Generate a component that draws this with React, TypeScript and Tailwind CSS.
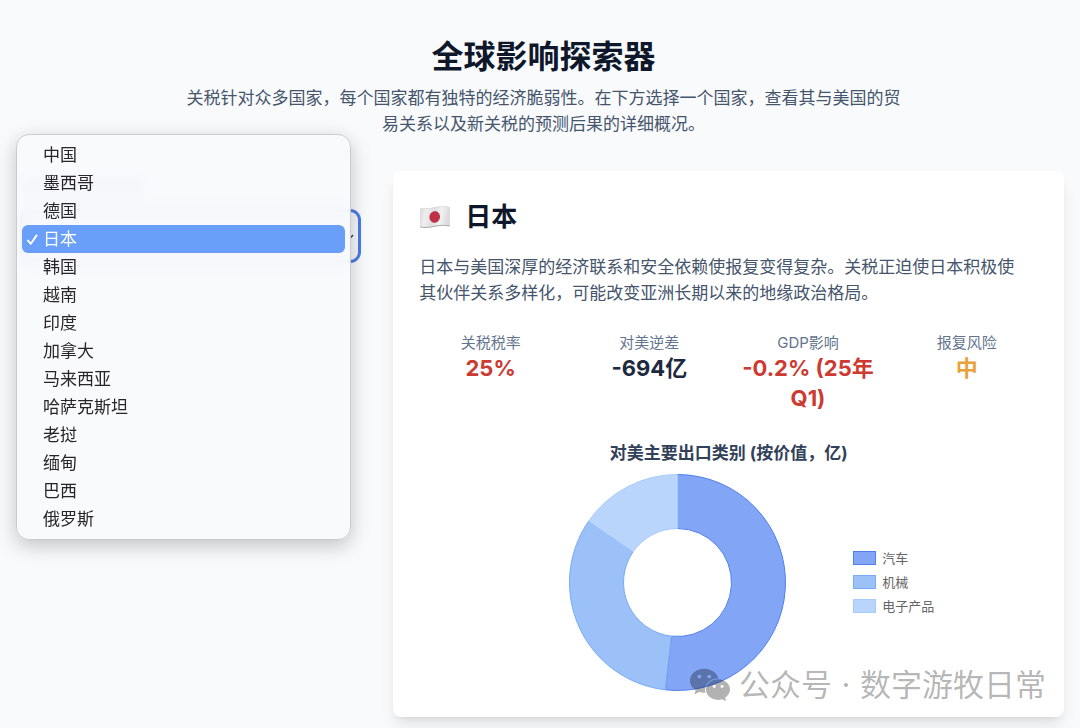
import { useState } from "react";
import { FaWeixin } from "react-icons/fa";

const countries = [
  "中国",
  "墨西哥",
  "德国",
  "日本",
  "韩国",
  "越南",
  "印度",
  "加拿大",
  "马来西亚",
  "哈萨克斯坦",
  "老挝",
  "缅甸",
  "巴西",
  "俄罗斯",
];

const stats = [
  { label: "关税税率", value: "25%", tone: "text-[#cd3a32]" },
  { label: "对美逆差", value: "-694亿", tone: "text-slate-800" },
  { label: "GDP影响", value: "-0.2% (25年 Q1)", tone: "text-[#cd3a32]" },
  { label: "报复风险", value: "中", tone: "text-[#e9a23b]" },
];

const exportsData = [
  {
    label: "汽车",
    share: 51.8,
    shape: "fill-[#82a5f5] stroke-[#4f80ee]",
    swatch: "border-[#4f80ee] bg-[#82a5f5]",
  },
  {
    label: "机械",
    share: 32.8,
    shape: "fill-[#9cc0f8] stroke-[#78aaf7]",
    swatch: "border-[#78aaf7] bg-[#9cc0f8]",
  },
  {
    label: "电子产品",
    share: 15.4,
    shape: "fill-[#b9d5fc] stroke-[#a6cbfb]",
    swatch: "border-[#a6cbfb] bg-[#b9d5fc]",
  },
];

function point(radius: number, share: number) {
  const angle = (share / 100) * Math.PI * 2;
  return `${108.5 + radius * Math.sin(angle)} ${108.5 - radius * Math.cos(angle)}`;
}

function ringSlice(start: number, end: number) {
  const large = end - start > 50 ? 1 : 0;
  return [
    `M ${point(108, start)}`,
    `A 108 108 0 ${large} 1 ${point(108, end)}`,
    `L ${point(54, end)}`,
    `A 54 54 0 ${large} 0 ${point(54, start)}`,
    "Z",
  ].join(" ");
}

function Donut() {
  let start = 0;
  return (
    <svg viewBox="0 0 217 217" className="h-[217px] w-[217px]" role="img" aria-label="对美主要出口类别">
      {exportsData.map((item) => {
        const from = start;
        start += item.share;
        return <path key={item.label} d={ringSlice(from, start)} className={item.shape} strokeWidth="1" />;
      })}
    </svg>
  );
}

function JapanFlag() {
  return (
    <svg viewBox="0 0 30 22" className="h-[22px] w-[30px]" aria-hidden="true">
      <defs>
        <linearGradient id="cloth" x1="0" x2="1" y1="0" y2="0.15">
          <stop offset="0" stopColor="#d9d9d9" />
          <stop offset="0.22" stopColor="#efefef" />
          <stop offset="0.5" stopColor="#dedede" />
          <stop offset="0.75" stopColor="#f3f3f3" />
          <stop offset="1" stopColor="#dcdcdc" />
        </linearGradient>
      </defs>
      <path
        d="M0.5 2.2C5 3 9 2.8 14 1.6C19 0.4 24 0.2 29.5 1.2V20C24 19 19 19.3 14 20.4C9 21.6 5 21.8 0.5 21Z"
        fill="url(#cloth)"
        stroke="#cfcfcf"
        strokeWidth="0.6"
      />
      <path d="M0.5 21C5 21.8 9 21.6 14 20.4C19 19.3 24 19 29.5 20" fill="none" stroke="#a9a9a9" strokeWidth="0.9" />
      <ellipse cx="14.7" cy="11" rx="5.3" ry="5.8" fill="#bd3048" transform="rotate(12 14.7 11)" />
    </svg>
  );
}

function CountryPicker() {
  const [selected, setSelected] = useState("日本");
  return (
    <div className="relative pt-[7px]">
      <div className="h-4 w-[120px] rounded bg-slate-400/50" aria-hidden="true" />
      <div className="relative mt-[18px]">
        <select
          aria-label="国家"
          value={selected}
          onChange={(e) => setSelected(e.target.value)}
          className="block h-12 w-full appearance-none rounded-lg bg-[#f6f7f9] px-3 text-[17px] text-transparent outline-none ring-3 ring-[#4a7be6]"
        >
          {countries.map((name) => (
            <option key={name}>{name}</option>
          ))}
        </select>
        <svg
          viewBox="0 0 8 6"
          className="pointer-events-none absolute right-1 top-[22px] h-[6px] w-2 fill-none stroke-slate-700"
          strokeWidth="1.4"
          aria-hidden="true"
        >
          <path d="M1 1L4 4.5L7 1" />
        </svg>
      </div>
      <ul
        role="listbox"
        aria-label="国家"
        className="absolute -left-[7px] -top-[37px] z-10 w-full rounded-[13px] border border-[#c9cbce] bg-[#f8f9fc]/90 px-[5px] py-[6px] shadow-[0_6px_20px_rgba(0,0,0,0.22)] backdrop-blur-[7px]"
      >
        {countries.map((name) => (
          <li
            key={name}
            role="option"
            aria-selected={name === selected}
            onClick={() => setSelected(name)}
            className={
              name === selected
                ? "flex h-7 items-center rounded-md bg-[#699ef9] pl-1 pt-[2px] text-[17px] text-white"
                : "flex h-7 items-center rounded-md pl-1 pt-[2px] text-[17px] text-[#262628]"
            }
          >
            <span className="flex w-[17px] shrink-0">
              {name === selected && (
                <svg
                  viewBox="0 0 12 12"
                  className="h-3 w-3 fill-none stroke-white"
                  strokeWidth="1.9"
                  strokeLinecap="round"
                  strokeLinejoin="round"
                  aria-hidden="true"
                >
                  <path d="M1.8 6.4L4.8 9.8L10.6 1.4" />
                </svg>
              )}
            </span>
            {name}
          </li>
        ))}
      </ul>
    </div>
  );
}

function CountryCard() {
  return (
    <article className="rounded-lg bg-white p-[26px] shadow-[0_10px_16px_-3px_rgba(0,0,0,0.1),0_4px_6px_-4px_rgba(0,0,0,0.1)]">
      <div className="flex items-center gap-[15px] pl-px">
        <JapanFlag />
        <h2 className="text-[26px] font-bold leading-[39px] text-slate-900">日本</h2>
      </div>
      <p className="mt-[18px] pr-3 text-[17px] leading-[26px] text-slate-600">
        日本与美国深厚的经济联系和安全依赖使报复变得复杂。关税正迫使日本积极使其伙伴关系多样化，可能改变亚洲长期以来的地缘政治格局。
      </p>
      <dl className="mt-[26px] grid grid-cols-4 gap-4 text-center">
        {stats.map((stat) => (
          <div key={stat.label}>
            <dt className="text-[15px] leading-[21px] text-slate-500">{stat.label}</dt>
            <dd className={`text-[22px] font-bold leading-[30px] ${stat.tone}`}>{stat.value}</dd>
          </div>
        ))}
      </dl>
      <h3 className="mt-[27px] text-center text-[17px] font-bold leading-[26px] text-slate-700">
        对美主要出口类别 (按价值，亿)
      </h3>
      <div className="mx-auto mt-2 flex max-w-[433px] items-center pr-[11px]">
        <div className="flex flex-1 justify-center pr-[10px]">
          <Donut />
        </div>
        <ul className="flex flex-col gap-1 pb-[2px]">
          {exportsData.map((item) => (
            <li key={item.label} className="flex items-center gap-[6px] text-[13px] leading-5 text-[#666666]">
              <span className={`h-[14px] w-[23px] border ${item.swatch}`} />
              {item.label}
            </li>
          ))}
        </ul>
      </div>
    </article>
  );
}

export default function App() {
  return (
    <main
      lang="zh-CN"
      className="min-h-screen bg-[#f9fafc] pb-[11px] pl-[23px] pr-4 pt-[37px] font-['Inter','Noto_Sans_CJK_SC',sans-serif]"
    >
      <header className="text-center">
        <h1 className="text-[32px] font-bold leading-[39px] text-slate-900">全球影响探索器</h1>
        <p className="mx-auto mt-[9px] max-w-[728px] text-[17px] leading-[26px] text-slate-600">
          关税针对众多国家，每个国家都有独特的经济脆弱性。在下方选择一个国家，查看其与美国的贸易关系以及新关税的预测后果的详细概况。
        </p>
      </header>
      <section className="relative mt-[34px] grid grid-cols-[1fr_2fr] items-start gap-[35px]">
        <CountryPicker />
        <CountryCard />
        <div className="pointer-events-none absolute bottom-[10px] right-[18px] flex items-center gap-2 text-black/30">
          <FaWeixin className="h-[42px] w-[42px]" aria-hidden="true" />
          <span className="flex items-center gap-3 whitespace-nowrap text-[31px] leading-[44px]">
            <span>公众号</span>
            <span className="h-1 w-1 rounded-full bg-current" aria-hidden="true" />
            <span>数字游牧日常</span>
          </span>
        </div>
      </section>
    </main>
  );
}
